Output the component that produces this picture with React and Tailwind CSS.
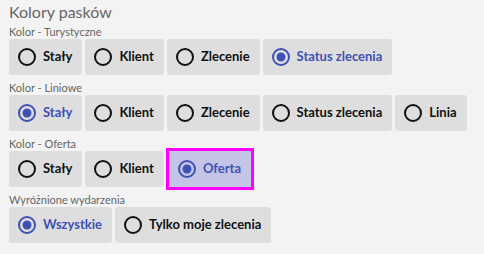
import React from "react";

const groups = [
  {
    label: "Kolor - Turystyczne",
    options: ["Stały", "Klient", "Zlecenie", "Status zlecenia"],
    selected: "Status zlecenia",
  },
  {
    label: "Kolor - Liniowe",
    options: ["Stały", "Klient", "Zlecenie", "Status zlecenia", "Linia"],
    selected: "Stały",
  },
  {
    label: "Kolor - Oferta",
    options: ["Stały", "Klient", "Oferta"],
    selected: "Oferta",
    focused: "Oferta",
  },
  {
    label: "Wyróżnione wydarzenia",
    options: ["Wszystkie", "Tylko moje zlecenia"],
    selected: "Wszystkie",
  },
];

const Radio = ({ checked }) => (
  <svg width="20" height="20" viewBox="0 0 20 20" className="shrink-0">
    <circle
      cx="10"
      cy="10"
      r="8"
      fill="none"
      stroke={checked ? "#3f51b5" : "#111"}
      strokeWidth="2"
    />
    {checked && <circle cx="10" cy="10" r="4.5" fill="#3f51b5" />}
  </svg>
);

const Option = ({ text, checked, focused }) => (
  <button
    className={`flex items-center gap-[6px] h-9 pl-2 pr-[10px] whitespace-nowrap text-[13px] font-bold ${
      checked ? "text-[#3f51b5]" : "text-[#111]"
    } ${
      focused
        ? "bg-[#c3c4e6] outline-3 outline-[#ff00ff] outline-offset-0 ml-[2px] mr-[1px]"
        : "bg-[#dedede] rounded-[3px]"
    }`}
  >
    <Radio checked={checked} />
    <span>{text}</span>
  </button>
);

export default function App() {
  return (
    <div className="w-[484px] h-[254px] bg-[#f3f3f3] px-[9px] pt-[2px] font-['Lato',sans-serif]">
      <h1 className="text-[16px] leading-[20px] text-[#666]">Kolory pasków</h1>
      {groups.map((g, i) => (
        <div key={i} className={i === 0 ? "mt-[2px]" : "mt-[5px]"}>
          <div className="text-[11px] leading-[15px] text-[#666]">{g.label}</div>
          <div className="flex gap-[3px]">
            {g.options.map((o) => (
              <Option
                key={o}
                text={o}
                checked={o === g.selected}
                focused={o === g.focused}
              />
            ))}
          </div>
        </div>
      ))}
    </div>
  );
}
